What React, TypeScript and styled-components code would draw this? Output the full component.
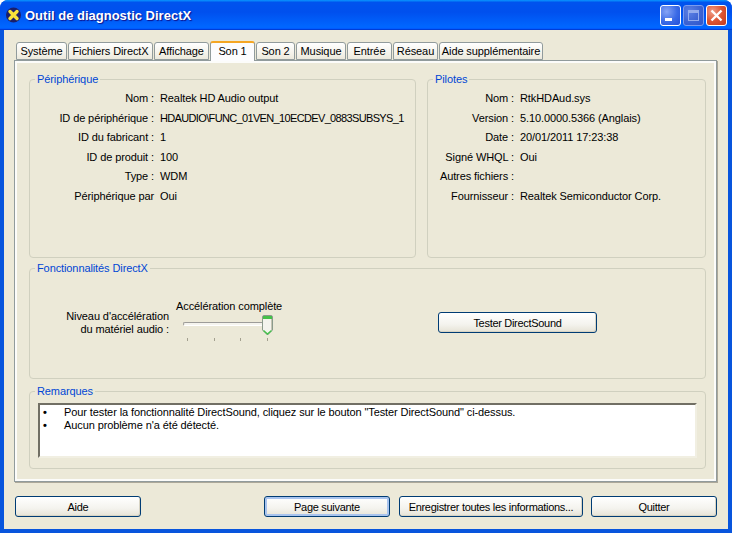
import React from 'react'
import styled, { createGlobalStyle } from 'styled-components'

const GlobalStyle = createGlobalStyle`
  html, body { margin: 0; padding: 0; background: #fff; }
  body { font-family: "Liberation Sans", Arial, sans-serif; font-size: 11px; letter-spacing: -0.1px; color: #000; }
  * { box-sizing: border-box; }
`

const Window = styled.div`
  width: 732px;
  height: 533px;
  display: flex;
  flex-direction: column;
  border-radius: 8px 8px 0 0;
  overflow: hidden;
  background: #0855dd;
`

const TitleBar = styled.div`
  height: 30px;
  flex: none;
  display: flex;
  align-items: center;
  padding: 0 5px 0 6px;
  background: linear-gradient(180deg, #0997ff, #0053ee 8%, #0050ee 40%, #0066ff 88%, #0066ff 93%, #005bff 95%, #003dd7 96%, #003dd7);
`

const TitleText = styled.span`
  margin: 1px 0 0 4px;
  flex: 1;
  color: #fff;
  font-weight: 700;
  font-size: 13px;
  letter-spacing: 0;
  text-shadow: 1px 1px 1px #0f1089;
`

const CaptionButton = styled.span<{ $kind: 'min' | 'max' | 'close' }>`
  width: 21px;
  height: 21px;
  margin-left: 2px;
  display: flex;
  align-items: center;
  justify-content: center;
  border: 1px solid ${(p) => (p.$kind === 'max' ? '#7a9bee' : '#fff')};
  border-radius: 3px;
  background: ${(p) =>
    p.$kind === 'close'
      ? 'radial-gradient(circle at 30% 30%, #f0a08a, #dd5533 50%, #c33a1c)'
      : p.$kind === 'max'
        ? 'radial-gradient(circle at 30% 30%, #5c80e4, #3b62d2 60%, #2f55cc)'
        : 'radial-gradient(circle at 30% 30%, #86a4f5, #3a6ae6 55%, #2450d8)'};
`

const Body = styled.div`
  flex: 1;
  margin: 0 4px 4px;
  padding: 10px 11px 0 10px;
  background: #ece9d8;
  display: flex;
  flex-direction: column;
`

const TabStrip = styled.div`
  display: flex;
  align-items: flex-end;
  height: 20px;
  padding-left: 2px;
  gap: 1px;
  position: relative;
  z-index: 1;
`

const Tab = styled.div<{ $w: number; $active?: boolean }>`
  width: ${(p) => p.$w}px;
  height: ${(p) => (p.$active ? 20 : 18)}px;
  margin-bottom: ${(p) => (p.$active ? -1 : 0)}px;
  display: flex;
  align-items: center;
  justify-content: center;
  white-space: nowrap;
  border: 1px solid #919b9c;
  border-bottom: ${(p) => (p.$active ? 'none' : '1px solid #919b9c')};
  border-top: ${(p) => (p.$active ? '2px solid #f5a623' : '1px solid #919b9c')};
  border-radius: 3px 3px 0 0;
  padding-bottom: ${(p) => (p.$active ? 2 : 0)}px;
  background: ${(p) => (p.$active ? '#fcfcfe' : 'linear-gradient(180deg, #fff, #f3f1e8 70%, #ece9dc)')};
`

const Panel = styled.div`
  height: 422px;
  padding: 18px 10px 0 14px;
  border: 1px solid #919b9c;
  background: #ece9d8;
  box-shadow: inset 0 0 0 2px #fcfcfa, 1px 1px 0 #aca899;
  display: flex;
  flex-direction: column;
`

const TopRow = styled.div`
  display: flex;
  gap: 11px;
  margin-bottom: 10px;
`

const Group = styled.div<{ $w?: number; $h: number; $mt?: number }>`
  position: relative;
  flex: none;
  width: ${(p) => (p.$w ? `${p.$w}px` : '100%')};
  height: ${(p) => p.$h}px;
  margin-top: ${(p) => p.$mt ?? 0}px;
  border: 1px solid #d0d0bf;
  border-radius: 4px;
`

const GroupTitle = styled.span`
  position: absolute;
  top: -8px;
  left: 5px;
  padding: 0 2px;
  background: #ece9d8;
  color: #0046d5;
  line-height: 14px;
`

const InfoGrid = styled.div<{ $labelW: number }>`
  display: grid;
  grid-template-columns: ${(p) => p.$labelW}px 1fr;
  grid-auto-rows: 19.6px;
  column-gap: 6px;
  padding-top: 8.3px;
  align-items: center;
`

const Label = styled.span`
  text-align: right;
  white-space: nowrap;
`

const Value = styled.span<{ $tight?: boolean }>`
  white-space: nowrap;
  letter-spacing: ${(p) => (p.$tight ? '-0.65px' : 'inherit')};
`

const FeatureBody = styled.div`
  display: flex;
  align-items: flex-start;
  padding-top: 30px;
`

const LevelLabel = styled.div`
  width: 139px;
  margin-top: 11px;
  text-align: right;
  line-height: 13px;
`

const SliderColumn = styled.div`
  margin: 1px 0 0 7px;
  width: 106px;
  display: flex;
  flex-direction: column;
`

const SliderValue = styled.div`
  line-height: 13px;
  white-space: nowrap;
`

const SliderTrack = styled.div`
  position: relative;
  margin: 9px 0 0 7px;
  width: 84px;
  height: 4px;
  border: 1px solid;
  border-color: #9d9c99 #d6d2c2 #fff #9d9c99;
  border-radius: 2px;
  background: #f5f4ee;
`

const SliderThumb = styled.svg`
  position: absolute;
  right: -7px;
  top: -8px;
`

const Ticks = styled.div`
  display: flex;
  justify-content: space-between;
  width: 81px;
  margin: 12px 0 0 11px;
`

const Tick = styled.i`
  display: block;
  width: 1px;
  height: 3px;
  background: #a3a08f;
`

const TestButtonSlot = styled.div`
  margin: 13px 0 0 156px;
`

const Notes = styled.div`
  margin: 11px 8px 0;
  height: 55px;
  padding: 1px 3px;
  background: #fff;
  border: 2px solid;
  border-color: #716f64 #f1efe2 #f1efe2 #716f64;
`

const NoteRow = styled.div`
  display: flex;
  height: 12.7px;
  line-height: 12.7px;
  white-space: nowrap;
`

const Bullet = styled.span`
  width: 21px;
  flex: none;
  line-height: 12.7px;
  font-weight: 700;
`

const Footer = styled.div`
  display: flex;
  align-items: center;
  gap: 8px;
  margin-top: 14px;
  padding-left: 1px;
`

const Button = styled.button<{ $w: number; $default?: boolean; $mr?: string }>`
  width: ${(p) => p.$w}px;
  height: 21px;
  padding: 0;
  font: inherit;
  letter-spacing: -0.3px;
  color: #000;
  white-space: nowrap;
  border: 1px solid #003c74;
  border-radius: 3px;
  background: linear-gradient(180deg, #fff, #f4f3ee 60%, #e6e3d6);
  box-shadow: ${(p) => (p.$default ? 'inset 0 0 0 2px #a9c4ee' : 'inset -1px -1px 0 #d8d4c4')};
  margin-right: ${(p) => p.$mr ?? 0};
`

const tabs = [
  { label: 'Système', w: 51 },
  { label: 'Fichiers DirectX', w: 85 },
  { label: 'Affichage', w: 55 },
  { label: 'Son 1', w: 45, active: true },
  { label: 'Son 2', w: 39 },
  { label: 'Musique', w: 50 },
  { label: 'Entrée', w: 45 },
  { label: 'Réseau', w: 45 },
  { label: 'Aide supplémentaire', w: 104 },
]

const device = [
  ['Nom :', 'Realtek HD Audio output'],
  ['ID de périphérique :', 'HDAUDIO\\FUNC_01VEN_10ECDEV_0883SUBSYS_1'],
  ['ID du fabricant :', '1'],
  ['ID de produit :', '100'],
  ['Type :', 'WDM'],
  ['Périphérique par', 'Oui'],
]

const drivers = [
  ['Nom :', 'RtkHDAud.sys'],
  ['Version :', '5.10.0000.5366 (Anglais)'],
  ['Date :', '20/01/2011 17:23:38'],
  ['Signé WHQL :', 'Oui'],
  ['Autres fichiers :', ''],
  ['Fournisseur :', 'Realtek Semiconductor Corp.'],
]

const InfoRows: React.FC<{ rows: string[][]; labelW: number }> = ({ rows, labelW }) => (
  <InfoGrid $labelW={labelW}>
    {rows.map(([label, value]) => (
      <React.Fragment key={label}>
        <Label>{label}</Label>
        <Value $tight={value.length > 30}>{value}</Value>
      </React.Fragment>
    ))}
  </InfoGrid>
)

const App: React.FC = () => (
  <>
    <GlobalStyle />
    <Window>
      <TitleBar>
        <svg width="15" height="16" viewBox="0 0 15 16">
          <circle cx="7.5" cy="8" r="7.5" fill="#1a1f6b" />
          <path d="M4 4.5 L11 11.5 M11 4.5 L4 11.5" stroke="#f7e23a" strokeWidth="3.4" strokeLinecap="round" />
        </svg>
        <TitleText>Outil de diagnostic DirectX</TitleText>
        <CaptionButton $kind="min">
          <svg width="13" height="13" viewBox="0 0 13 13">
            <rect x="1" y="9" width="7" height="3" fill="#fff" />
          </svg>
        </CaptionButton>
        <CaptionButton $kind="max">
          <svg width="13" height="13" viewBox="0 0 13 13" fill="none">
            <rect x="1.5" y="1.5" width="10" height="10" stroke="#94aced" />
            <rect x="1" y="1" width="11" height="3" fill="#94aced" />
          </svg>
        </CaptionButton>
        <CaptionButton $kind="close">
          <svg width="13" height="13" viewBox="0 0 13 13">
            <path d="M1.5 1.5 L11.5 11.5 M11.5 1.5 L1.5 11.5" stroke="#fff" strokeWidth="2.4" />
          </svg>
        </CaptionButton>
      </TitleBar>

      <Body>
        <TabStrip>
          {tabs.map((tab) => (
            <Tab key={tab.label} $w={tab.w} $active={tab.active}>
              {tab.label}
            </Tab>
          ))}
        </TabStrip>

        <Panel>
          <TopRow>
            <Group $w={387} $h={179}>
              <GroupTitle>Périphérique</GroupTitle>
              <InfoRows rows={device} labelW={124} />
            </Group>
            <Group $w={279} $h={179}>
              <GroupTitle>Pilotes</GroupTitle>
              <InfoRows rows={drivers} labelW={86} />
            </Group>
          </TopRow>

          <Group $h={111}>
            <GroupTitle>Fonctionnalités DirectX</GroupTitle>
            <FeatureBody>
              <LevelLabel>
                Niveau d'accélération
                <br />
                du matériel audio :
              </LevelLabel>
              <SliderColumn>
                <SliderValue>Accélération complète</SliderValue>
                <SliderTrack>
                  <SliderThumb width="11" height="21" viewBox="0 0 11 21">
                    <path d="M0.5 2 Q0.5 0.5 2 0.5 H9 Q10.5 0.5 10.5 2 V15 L5.5 20 L0.5 15 Z" fill="#f4f4ee" stroke="#8b9a8c" />
                    <rect x="1" y="1" width="9" height="3" fill="#45c04a" />
                    <path d="M1.5 15.5 L5.5 19 L9.5 15.5" fill="none" stroke="#45c04a" strokeWidth="1.4" />
                    <path d="M9.5 4 V15" stroke="#c6c4b4" />
                  </SliderThumb>
                </SliderTrack>
                <Ticks>
                  <Tick />
                  <Tick />
                  <Tick />
                  <Tick />
                </Ticks>
              </SliderColumn>
              <TestButtonSlot>
                <Button $w={159}>Tester DirectSound</Button>
              </TestButtonSlot>
            </FeatureBody>
          </Group>

          <Group $h={78} $mt={12}>
            <GroupTitle>Remarques</GroupTitle>
            <Notes>
              <NoteRow>
                <Bullet>•</Bullet>
                Pour tester la fonctionnalité DirectSound, cliquez sur le bouton "Tester DirectSound" ci-dessus.
              </NoteRow>
              <NoteRow>
                <Bullet>•</Bullet>
                Aucun problème n'a été détecté.
              </NoteRow>
            </Notes>
          </Group>
        </Panel>

        <Footer>
          <Button $w={126} $mr="auto">
            Aide
          </Button>
          <Button $w={126} $default $mr="1px">
            Page suivante
          </Button>
          <Button $w={184}>Enregistrer toutes les informations...</Button>
          <Button $w={126}>Quitter</Button>
        </Footer>
      </Body>
    </Window>
  </>
)

export default App
